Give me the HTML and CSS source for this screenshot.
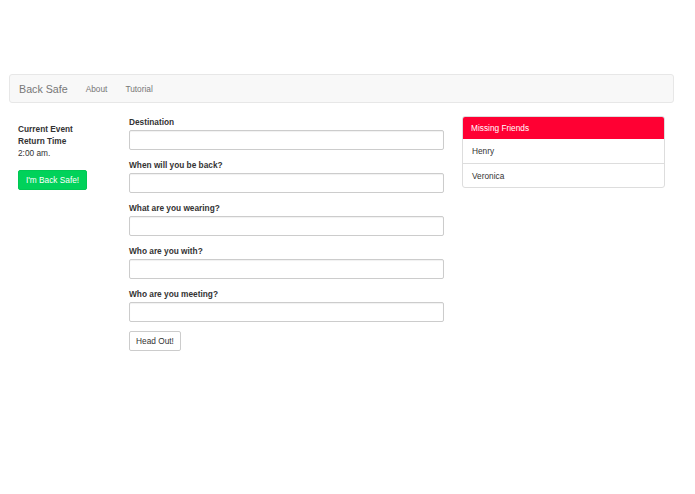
FILE: index.html
```html
<!DOCTYPE html>
<html lang="en">
<head>
<meta charset="utf-8">
<title>Back Safe</title>
<link rel="stylesheet" href="styles.css">
</head>
<body>
<nav class="navbar">
  <span class="brand">Back Safe</span>
  <a class="nav-link" href="#">About</a>
  <a class="nav-link" href="#">Tutorial</a>
</nav>
<main class="content">
  <section class="status">
    <div class="status-title">Current Event</div>
    <div class="status-title">Return Time</div>
    <div class="status-time">2:00 am.</div>
    <button class="btn btn-safe" type="button">I'm Back Safe!</button>
  </section>
  <form class="trip-form">
    <div class="form-group">
      <label class="field-label">Destination</label>
      <input class="field-input" type="text">
    </div>
    <div class="form-group">
      <label class="field-label">When will you be back?</label>
      <input class="field-input" type="text">
    </div>
    <div class="form-group">
      <label class="field-label">What are you wearing?</label>
      <input class="field-input" type="text">
    </div>
    <div class="form-group">
      <label class="field-label">Who are you with?</label>
      <input class="field-input" type="text">
    </div>
    <div class="form-group">
      <label class="field-label">Who are you meeting?</label>
      <input class="field-input" type="text">
    </div>
    <button class="btn btn-default" type="button">Head Out!</button>
  </form>
  <aside class="panel">
    <div class="panel-heading">Missing Friends</div>
    <div class="panel-item">Henry</div>
    <div class="panel-item">Veronica</div>
  </aside>
</main>
</body>
</html>
```
FILE: styles.css
```css
* { box-sizing: border-box; }
html, body { margin: 0; padding: 0; background: #fff; }
body {
  font-family: "Liberation Sans", Arial, sans-serif;
  font-size: 8.3px;
  line-height: 12px;
  color: #333;
  padding-top: 74px;
}
.navbar {
  margin-left: 9px;
  width: 665px;
  height: 29px;
  background: #f8f8f8;
  border: 1px solid #e7e7e7;
  border-radius: 3px;
  display: flex;
  align-items: center;
  padding-left: 9px;
}
.brand {
  font-size: 10.7px;
  color: #777;
  margin-right: 18px;
}
.nav-link {
  color: #777;
  text-decoration: none;
  margin-right: 18px;
}
.content {
  display: flex;
  align-items: flex-start;
  padding-left: 18px;
  margin-top: 13px;
}
.status {
  width: 111px;
  padding-top: 7px;
}
.status-title { font-weight: bold; }
.btn {
  font-family: inherit;
  font-size: 8.3px;
  height: 20px;
  border-radius: 2px;
  padding: 0;
  white-space: nowrap;
  text-align: center;
  cursor: pointer;
}
.btn-safe {
  margin-top: 11px;
  width: 69px;
  background: #00d25a;
  border: 1px solid #00c854;
  color: #fff;
}
.trip-form {
  width: 315px;
}
.form-group { margin-bottom: 9px; }
.field-label {
  display: block;
  font-weight: bold;
  line-height: 11px;
  padding-top: 1px;
  margin-bottom: 2px;
}
.field-input {
  display: block;
  width: 100%;
  height: 20px;
  border: 1px solid #ccc;
  border-radius: 2px;
  box-shadow: inset 0 1px 1px rgba(0,0,0,0.06);
  background: #fff;
}
.btn-default {
  width: 52px;
  background: #fff;
  border: 1px solid #ccc;
  color: #333;
}
.panel {
  margin-left: 18px;
  width: 203px;
  border: 1px solid #ddd;
  border-radius: 3px;
  overflow: hidden;
}
.panel-heading {
  background: #ff0033;
  color: #fff;
  height: 23px;
  line-height: 22px;
  padding: 1px 0 0 9px;
  margin: -1px -1px 0 -1px;
}
.panel-item {
  height: 24px;
  line-height: 21px;
  padding: 2px 0 0 9px;
  border-top: 1px solid #ddd;
}
.panel-heading + .panel-item { border-top: none; }
```
